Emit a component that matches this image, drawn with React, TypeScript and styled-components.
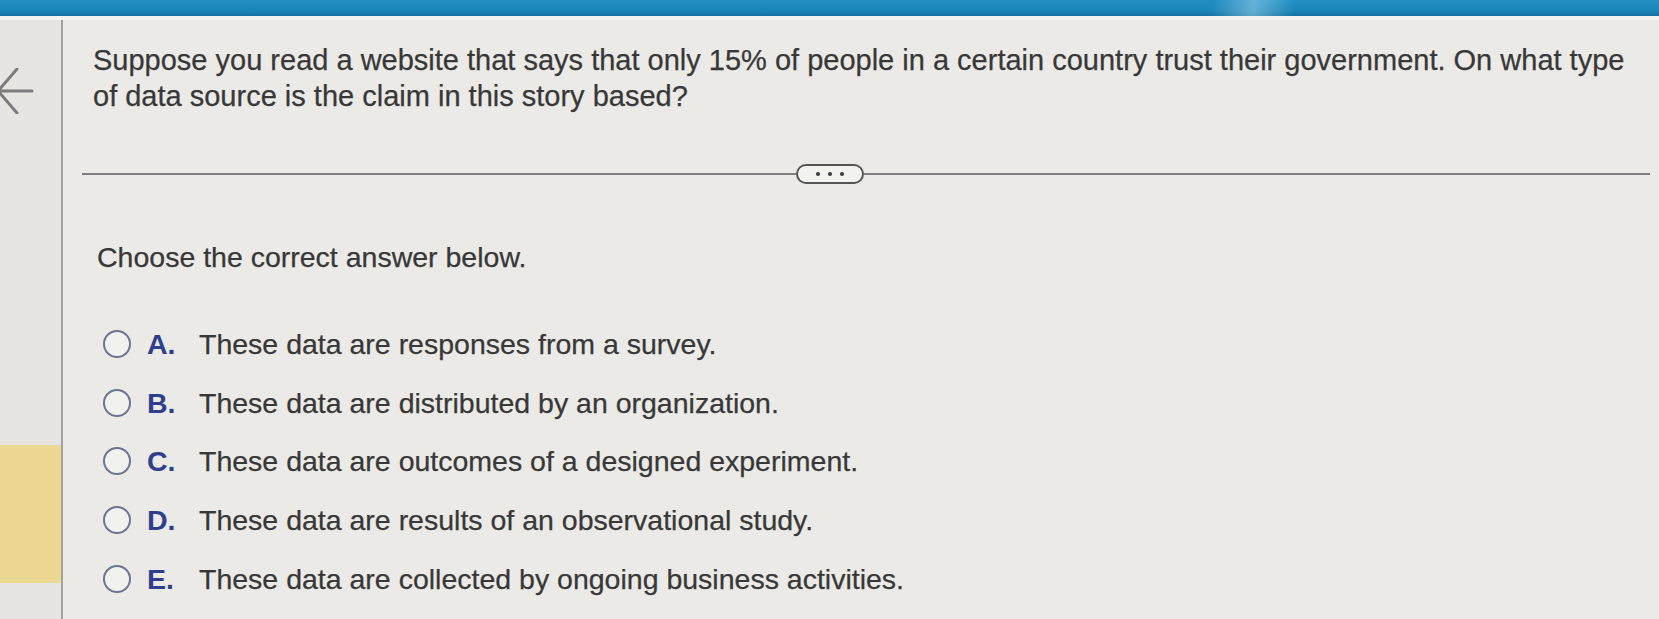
import React from "react";
import styled, { createGlobalStyle } from "styled-components";

const GlobalStyle = createGlobalStyle`
  html, body {
    margin: 0;
    padding: 0;
    background: #ebeae6;
  }
  body {
    font-family: "Liberation Sans", Arial, sans-serif;
    overflow: hidden;
  }
`;

const Page = styled.div`
  display: flex;
  flex-direction: column;
  width: 1659px;
  height: 619px;
  background: #ebeae6;
`;

const TopBar = styled.div`
  flex: none;
  height: 16px;
  background:
    linear-gradient(100deg, transparent 73%, rgba(170, 215, 240, 0.5) 75.5%, transparent 78%),
    linear-gradient(180deg, #1f8fc4 0%, #1a84b7 70%, #14729f 100%);
`;

const Glare = styled.div`
  flex: none;
  height: 4px;
  background: #f3f3f0;
`;

const Main = styled.div`
  flex: 1;
  display: flex;
  min-height: 0;
`;

const Sidebar = styled.aside`
  flex: none;
  width: 61px;
  display: flex;
  flex-direction: column;
  padding-top: 48px;
  background: #e6e5e1;
  border-right: 2px solid #a3a3a1;
`;

const BackArrow = styled.svg`
  display: block;
  width: 34px;
  height: 46px;
`;

const Marker = styled.div`
  margin-top: 331px;
  height: 138px;
  background: #ecd892;
`;

const Content = styled.main`
  flex: 1;
  display: flex;
  flex-direction: column;
  padding: 22px 9px 0 19px;
  color: #383838;
  -webkit-text-stroke: 0.25px #383838;
`;

const Question = styled.p`
  margin: 0 0 0 11px;
  font-size: 29px;
  line-height: 36px;
  color: #383838;
`;

const DividerRow = styled.div`
  display: flex;
  align-items: center;
  height: 20px;
  margin-top: 50px;
`;

const Rule = styled.div<{ $grow?: boolean }>`
  height: 2px;
  background: #808080;
  flex: ${(p) => (p.$grow ? "1" : "none")};
  width: ${(p) => (p.$grow ? "auto" : "714px")};
`;

const MorePill = styled.button`
  flex: none;
  width: 68px;
  height: 20px;
  box-sizing: border-box;
  border: 2px solid #555;
  border-radius: 10px;
  background: #f2f2ef;
  display: flex;
  align-items: center;
  justify-content: center;
  gap: 8px;
  padding: 0;
`;

const Dot = styled.span`
  width: 4px;
  height: 4px;
  border-radius: 50%;
  background: #3a3a3a;
`;

const Prompt = styled.p`
  margin: 56px 0 0 15px;
  font-size: 28.5px;
  line-height: 34px;
  color: #383838;
`;

const Options = styled.div`
  display: flex;
  flex-direction: column;
  gap: 24.7px;
  margin: 53px 0 0 21px;
`;

const Option = styled.label`
  display: flex;
  align-items: center;
  height: 34px;
  font-size: 28.5px;
  line-height: 34px;
  cursor: pointer;
`;

const Radio = styled.span`
  flex: none;
  width: 28px;
  height: 28px;
  box-sizing: border-box;
  border: 2.5px solid #6c7493;
  border-radius: 50%;
  background: #f1f1ee;
  margin-right: 16px;
`;

const Letter = styled.span`
  flex: none;
  width: 52px;
  font-weight: bold;
  color: #2f3f8e;
  -webkit-text-stroke: 0;
`;

const OptionText = styled.span`
  color: #383838;
`;

const options = [
  { letter: "A.", text: "These data are responses from a survey." },
  { letter: "B.", text: "These data are distributed by an organization." },
  { letter: "C.", text: "These data are outcomes of a designed experiment." },
  { letter: "D.", text: "These data are results of an observational study." },
  { letter: "E.", text: "These data are collected by ongoing business activities." },
];

export default function App() {
  return (
    <>
      <GlobalStyle />
      <Page>
        <TopBar />
        <Glare />
        <Main>
          <Sidebar>
            <BackArrow viewBox="0 0 34 46">
              <path
                d="M17 1 L-2 23 L17 45 M-2 23 L32 23"
                fill="none"
                stroke="#7b7b7b"
                strokeWidth="3"
                strokeLinecap="round"
                strokeLinejoin="round"
              />
            </BackArrow>
            <Marker />
          </Sidebar>
          <Content>
            <Question>
              Suppose you read a website that says that only 15% of people in a certain country trust their government. On what type
              <br />
              of data source is the claim in this story based?
            </Question>
            <DividerRow>
              <Rule />
              <MorePill aria-label="more">
                <Dot />
                <Dot />
                <Dot />
              </MorePill>
              <Rule $grow />
            </DividerRow>
            <Prompt>Choose the correct answer below.</Prompt>
            <Options>
              {options.map((o) => (
                <Option key={o.letter}>
                  <Radio />
                  <Letter>{o.letter}</Letter>
                  <OptionText>{o.text}</OptionText>
                </Option>
              ))}
            </Options>
          </Content>
        </Main>
      </Page>
    </>
  );
}
